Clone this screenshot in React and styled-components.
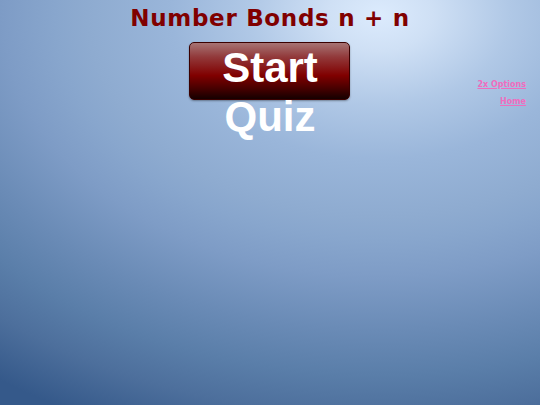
import React from "react";
import styled, { createGlobalStyle } from "styled-components";

const Global = createGlobalStyle`
  html, body { margin: 0; padding: 0; height: 100%; }
  body {
    width: 540px;
    height: 405px;
    overflow: hidden;
    background: radial-gradient(ellipse 650px 450px at 380px 15px, #dcebfd 0%, #cfe0f5 8%, #b0c8e6 20%, #9ab6da 32%, #8eabd0 45%, #88a6cd 50%, #7e9cc6 58%, #6a8bb6 70%, #5a7ea9 80%, #4d6f9c 89%, #35598a 100%), #33578a;
    font-family: "DejaVu Sans", sans-serif;
  }
`;

const Page = styled.div`
  width: 540px;
  height: 405px;
  display: grid;
  grid-template-columns: 1fr auto 1fr;
`;

const Center = styled.main`
  grid-column: 2;
  display: flex;
  flex-direction: column;
  align-items: center;
  padding-top: 5px;
`;

const Title = styled.h1`
  margin: 0;
  font-family: "DejaVu Sans", sans-serif;
  font-weight: bold;
  font-size: 23px;
  letter-spacing: 0.7px;
  line-height: 26px;
  color: #800000;
  white-space: nowrap;
`;

const StartButton = styled.button`
  margin-top: 11px;
  width: 161px;
  height: 58px;
  padding: 0;
  border: 1px solid #3a0000;
  border-radius: 5px;
  background: linear-gradient(to bottom, #a77474 0%, #92393a 25%, #800000 58%, #4a0000 80%, #150000 100%);
  box-shadow: 0 1px 2px rgba(0,0,0,0.35);
  color: #ffffff;
  font-family: "Liberation Sans", Arial, sans-serif;
  font-weight: bold;
  font-size: 42px;
  line-height: 49px;
  text-align: center;
  display: flex;
  flex-direction: column;
  align-items: center;
  justify-content: flex-start;
  overflow: visible;
  cursor: pointer;
`;

const Line = styled.span`
  display: block;
  height: 49px;
`;

const Nav = styled.nav`
  grid-column: 3;
  display: flex;
  flex-direction: column;
  align-items: flex-end;
  padding: 79px 14px 0 0;
  gap: 5px;
`;

const NavLink = styled.a`
  font-family: "DejaVu Sans", sans-serif;
  font-weight: bold;
  font-size: 8px;
  line-height: 12px;
  color: #f06cbe;
  text-decoration: underline;
`;

export default function App() {
  return (
    <>
      <Global />
      <Page>
        <Center>
          <Title>Number Bonds n + n</Title>
          <StartButton>
            <Line>Start</Line>
            <Line>Quiz</Line>
          </StartButton>
        </Center>
        <Nav>
          <NavLink href="#">2x Options</NavLink>
          <NavLink href="#">Home</NavLink>
        </Nav>
      </Page>
    </>
  );
}
